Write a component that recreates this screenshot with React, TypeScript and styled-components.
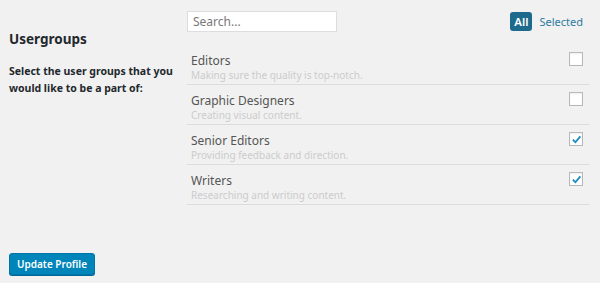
import styled, { createGlobalStyle } from 'styled-components';

const GlobalStyle = createGlobalStyle`
	body {
		margin: 0;
		background: #f1f1f1;
		font-family: "Noto Sans", "Open Sans", sans-serif;
		color: #23282d;
	}
`

const Page = styled.div`
	width: 600px;
	height: 283px;
	box-sizing: border-box;
	padding: 9px 0 0 9px;
	display: flex;
	flex-direction: column;
`

const Section = styled.div`
	display: flex;
	gap: 6px;
`

const Intro = styled.div`
	width: 172px;
	padding-top: 20px;
`

const Heading = styled.h2`
	margin: 0 0 14px;
	font-size: 13.5px;
	font-weight: 700;
	line-height: 20px;
	color: #23282d;
`

const Lead = styled.p`
	margin: 0;
	font-size: 10.5px;
	font-weight: 700;
	line-height: 17px;
	color: #23282d;
`

const Groups = styled.div`
	width: 403px;
	display: flex;
	flex-direction: column;
`

const Toolbar = styled.div`
	display: flex;
	justify-content: space-between;
	align-items: center;
	height: 24px;
	margin-bottom: 12px;
`

const Search = styled.input`
	width: 150px;
	height: 21px;
	box-sizing: border-box;
	border: 1px solid #ddd;
	background: #fff;
	padding: 0 5px;
	font-family: inherit;
	font-size: 12px;
	color: #555;
	outline: none;

	&::placeholder {
		color: #777;
	}
`

const Tabs = styled.div`
	display: flex;
	align-items: center;
	gap: 4px;
	padding-right: 4px;
`

const Tab = styled.span<{ $active?: boolean }>`
	font-size: ${p => p.$active ? '11.5px' : '11px'};
	line-height: 19px;
	padding: 0 ${p => p.$active ? '4px' : '3px'};
	border-radius: 3px;
	color: ${p => p.$active ? '#fff' : '#2e7aa0'};
	background: ${p => p.$active ? '#1e6a8d' : 'transparent'};
	font-weight: ${p => p.$active ? 600 : 400};
`

const Row = styled.div`
	display: flex;
	justify-content: space-between;
	height: 39px;
	padding: 0 7px 0 4px;
	border-bottom: 1px solid #dcdcdc;
`

const RowText = styled.div`
	padding-top: 8px;
	display: flex;
	flex-direction: column;
`

const Title = styled.span`
	font-size: 12px;
	line-height: 15px;
	color: #555;
`

const Desc = styled.span`
	font-size: 10px;
	line-height: 14px;
	color: #ccc;
`

const Check = styled.span`
	margin-top: 7px;
	width: 12px;
	height: 12px;
	border: 1px solid #b4b9be;
	background: #fff;
	display: flex;
	align-items: center;
	justify-content: center;
	box-shadow: inset 0 1px 2px rgba(0, 0, 0, 0.07);
`

const Footer = styled.div`
	margin-top: auto;
	padding-bottom: 8px;
`

const Button = styled.button`
	height: 22px;
	padding: 0 7px;
	border: 1px solid #0073aa;
	border-radius: 3px;
	background: #0085ba;
	color: #fff;
	font-family: inherit;
	font-size: 10px;
	font-weight: 600;
	box-shadow: 0 1px 0 #006799;
	cursor: pointer;
`

const groups = [
	{ name: 'Editors', desc: 'Making sure the quality is top-notch.', checked: false },
	{ name: 'Graphic Designers', desc: 'Creating visual content.', checked: false },
	{ name: 'Senior Editors', desc: 'Providing feedback and direction.', checked: true },
	{ name: 'Writers', desc: 'Researching and writing content.', checked: true },
]

const App = () => {
	return (
		<>
			<GlobalStyle />
			<Page>
				<Section>
					<Intro>
						<Heading>Usergroups</Heading>
						<Lead>Select the user groups that you would like to be a part of:</Lead>
					</Intro>
					<Groups>
						<Toolbar>
							<Search placeholder='Search...' />
							<Tabs>
								<Tab $active>All</Tab>
								<Tab>Selected</Tab>
							</Tabs>
						</Toolbar>
						{groups.map((group, i) => (
							<Row key={i}>
								<RowText>
									<Title>{group.name}</Title>
									<Desc>{group.desc}</Desc>
								</RowText>
								<Check>
									{group.checked && (
										<svg width='11' height='11' viewBox='0 0 12 12'>
											<path d='M2 6.2 L4.8 9 L10.2 2.6' fill='none' stroke='#1e8cbe' strokeWidth='2' />
										</svg>
									)}
								</Check>
							</Row>
						))}
					</Groups>
				</Section>
				<Footer>
					<Button>Update Profile</Button>
				</Footer>
			</Page>
		</>
	)
}

export default App;
